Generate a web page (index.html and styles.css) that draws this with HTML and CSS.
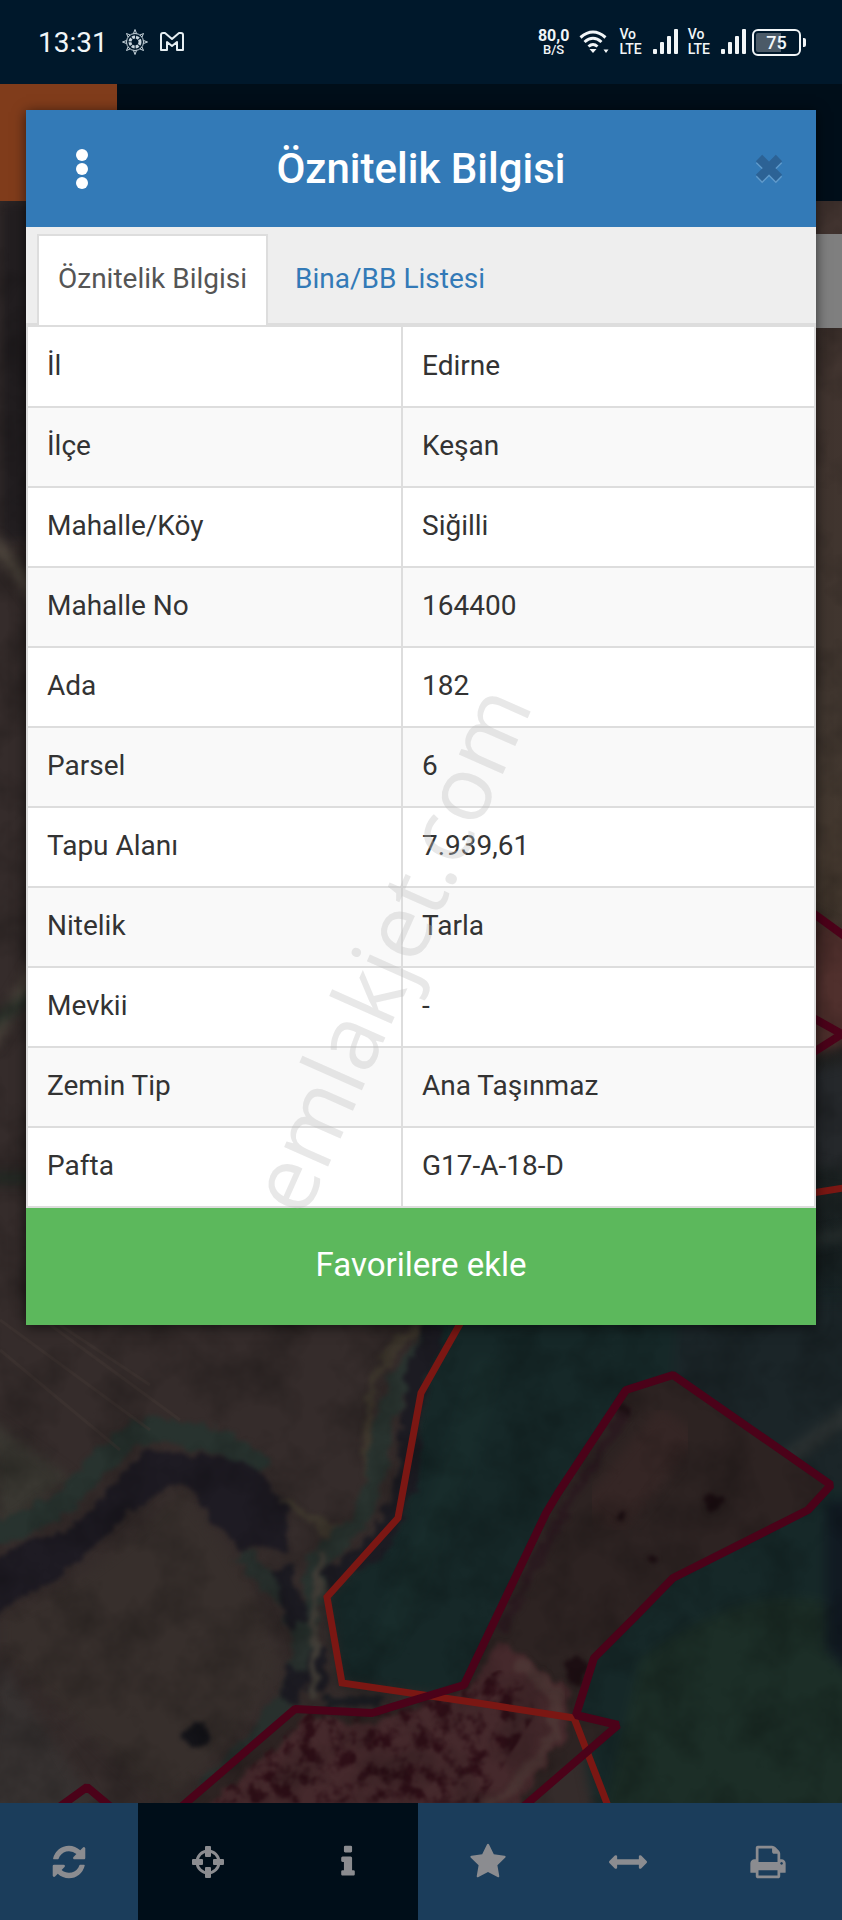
FILE: index.html
```
<!DOCTYPE html>
<html lang="tr">
<head>
  <meta charset="UTF-8" />
  <meta name="viewport" content="width=device-width, initial-scale=1.0" />
  <title>Öznitelik Bilgisi</title>
  <link rel="stylesheet" href="styles.css">
</head>
<body>
  <div class="status">
    <span class="clock">13:31</span>
    <svg class="gear" viewBox="0 0 26 26" width="26" height="26" fill="none" stroke="#c9d6de">
      <circle cx="13" cy="13" r="8.5"/>
      <circle cx="13" cy="13" r="5" stroke-width="3" stroke-dasharray="3 1"/>
      <path d="M11.5 4.5L13 .5l1.5 4M11.5 21.500l1.500 4 1.500-4M4.500 11.500L.5 13l4 1.500M21.500 11.500l4 1.500-4 1.500M6 8L4.500 4.500 8 6M20 8l1.500-3.500L18 6M6 18l-1.500 3.500L8 20M20 18l1.500 3.500L18 20"/>
    </svg>
    <svg class="mail" viewBox="0 0 24 20" width="24" height="20" fill="none" stroke="#e6eef2" stroke-width="2" stroke-linejoin="round">
      <path d="M1 3q0-2 2-2h2l7 6 7-6h2q2 0 2 2v15h-6V10l-5 4-5-4v8H1z"/>
    </svg>
    <div class="status-right">
      <div class="stack speed"><b>80,0</b><small>B/S</small></div>
      <svg class="wifi" viewBox="0 0 30 26" width="30" height="26" fill="none" stroke="#f2f6f8" stroke-width="3">
        <path d="M1.500 8.500q12.500-11 25 0M5.500 13q8.500-7.500 17 0M9.500 17.500q4.500-4 9 0"/>
        <path d="M10.500 20h7L14 24zM24.500 20.500h5L27 24z" fill="#f2f6f8" stroke="none"/>
      </svg>
      <div class="stack lte"><b>Vo</b><b>LTE</b></div>
      <svg class="signal" viewBox="0 0 26 26" width="26" height="26" fill="#f2f6f8">
        <rect y="20" width="4" height="5" rx="1"/><rect x="7" y="13" width="4" height="12" rx="1"/><rect x="14" y="7" width="4" height="18" rx="1"/><rect x="21" width="4" height="25" rx="1"/>
      </svg>
      <div class="stack lte"><b>Vo</b><b>LTE</b></div>
      <svg class="signal" viewBox="0 0 26 26" width="26" height="26" fill="#f2f6f8">
        <rect y="20" width="4" height="5" rx="1"/><rect x="7" y="13" width="4" height="12" rx="1"/><rect x="14" y="7" width="4" height="18" rx="1"/><rect x="21" width="4" height="25" rx="1"/>
      </svg>
      <div class="battery">75</div>
    </div>
  </div>

  <div class="topbar"><div class="menu-block"></div></div>

  <div class="map">
    <svg class="terrain" viewBox="0 201 842 1602" preserveAspectRatio="xMidYMax slice" color-interpolation-filters="sRGB">
      <defs>
        <filter id="soft" x="-10%" y="-10%" width="120%" height="120%"><feGaussianBlur stdDeviation="6"/></filter>
        <filter id="rough" x="-10%" y="-10%" width="120%" height="120%">
          <feTurbulence type="fractalNoise" baseFrequency="0.07" numOctaves="3" seed="4"/>
          <feDisplacementMap in="SourceGraphic" scale="18" xChannelSelector="R" yChannelSelector="G"/>
          <feGaussianBlur stdDeviation="2"/>
        </filter>
        <filter id="trees" x="0" y="0" width="100%" height="100%">
          <feTurbulence type="fractalNoise" baseFrequency="0.06" numOctaves="3" seed="9"/>
          <feColorMatrix values="0 0 0 0 .18  0 0 0 0 .06  0 0 0 0 .09  4 0 0 0 -1.8"/>
          <feComposite operator="in" in2="SourceGraphic"/>
          <feGaussianBlur stdDeviation="1"/>
        </filter>
        <filter id="grain" x="0" y="0" width="100%" height="100%">
          <feTurbulence type="fractalNoise" baseFrequency="0.02" numOctaves="4" seed="2"/>
          <feColorMatrix values="0 0 0 0 0  0 0 0 0 0  0 0 0 0 0  1.5 0 0 0 -.6"/>
        </filter>
        <linearGradient id="east" x2="0" y2="1">
          <stop offset="0" stop-color="#41332f"/><stop offset=".45" stop-color="#40362f"/>
          <stop offset=".62" stop-color="#45392f"/><stop offset=".75" stop-color="#20201f"/><stop offset="1" stop-color="#172426"/>
        </linearGradient>
      </defs>
      <rect y="201" width="842" height="1602" fill="#352c2b"/>
      <rect y="201" width="60" height="340" fill="#221e20" filter="url(#soft)"/>
      <rect x="780" y="201" width="62" height="1130" fill="url(#east)"/>
      <g filter="url(#soft)">
        <path d="M-10 1420L70 1478 0 1530z" fill="#393731"/>
        <path d="M0 1660L60 1750 110 1830H-20z" fill="#363130"/>
        <path d="M180 1490q80 90 100 180-60 100-120 130L0 1650V1620q110-50 180-130z" fill="#372f2c"/>
        <path d="M421 1300H870V1830H600L575 1715 342 1683 327 1597 398 1518 421 1393z" fill="#162828"/>
        <path d="M680 1300h190v190l-40-5-157-110z" fill="#1b2528"/>
        <path d="M640 1660q120-90 210-50v220H600z" fill="#1c2e27"/>
        <path d="M826 1500h40v190l-40-40z" fill="#111a22"/>
        <path d="M380 1650q60-120 110-290" fill="none" stroke="#182c2b" stroke-width="30"/>
        <path d="M780 1465l80-60" stroke="#2b3131" stroke-width="16"/>
      </g>
      <g filter="url(#rough)" fill="none">
        <path d="M-10 1535Q60 1515 90 1475 125 1430 165 1430 220 1435 262 1470" stroke="#28332f" stroke-width="24"/>
        <path d="M-10 1562L30 1538 67 1532 113 1485 143 1452 167 1452 207 1455 257 1468 288 1505V1548H240L213 1522 180 1480 133 1508 67 1572-10 1618z" fill="#1e1b23"/>
        <path d="M240 1555L290 1600 305 1650 280 1710 205 1790" stroke="#28302d" stroke-width="18"/>
        <path d="M425 1320Q370 1360 368 1410V1490Q365 1525 330 1532L285 1500" stroke="#40392f" stroke-width="9"/>
        <path d="M425 1350Q392 1380 384 1430T362 1520L318 1560 308 1640" stroke="#29332f" stroke-width="20"/>
        <path d="M435 1325Q406 1400 408 1480L380 1545 325 1580M280 1570L300 1625M316 1650V1690M298 1670L288 1700" stroke="#1c1b22" stroke-width="20"/>
        <path d="M322 1550L315 1600 312 1700" stroke="#413d37" stroke-width="8"/>
        <ellipse cx="197" cy="1735" rx="11" ry="12" fill="#141419"/>
        <path d="M325 1702h60" stroke="#1b1d22" stroke-width="14"/>
      </g>
      <g stroke="#443a35" stroke-width="3" opacity=".4">
        <path d="M0 1320l150 110M30 1310l150 110M0 1350l120 100M60 1325l90 60"/>
      </g>
      <g filter="url(#soft)" fill="none">
        <path d="M-10 540Q12 560 40 605M-10 1045L40 960" stroke="#5a5247" stroke-width="10"/>
        <path d="M-10 1025L40 990M-10 1178H40" stroke="#203027" stroke-width="8"/>
        <path d="M790 905L860 940V1040L790 1060z" fill="#50302d"/>
        <path d="M790 1075L860 1060V1170L790 1160z" fill="#25282b"/>
        <path d="M790 1245l60-12" stroke="#303735" stroke-width="7"/>
      </g>

      <path d="M673 1375L626 1390 558 1493 464 1685 421 1698 372 1713 295 1709 187 1803H528L618 1725 576 1715 594 1658 634 1618 673 1578 808 1510 831 1485z" fill="#2d2322"/>
      <path d="M680 1420L600 1520" stroke="#352625" stroke-width="50" filter="url(#soft)"/>
      <path d="M468 1690L421 1706 372 1722 305 1718 205 1810H515L565 1735 568 1690 500 1640z" fill="#45292c" filter="url(#rough)"/>
      <path d="M464 1685L372 1713 310 1712 210 1803H480L535 1715 530 1690 500 1670z" fill="#241018" filter="url(#trees)"/>
      <path d="M515 1665Q565 1680 555 1725T480 1810" fill="none" stroke="#4c3534" stroke-width="12" filter="url(#rough)"/>
      <path d="M628 1405L565 1510 500 1630" fill="none" stroke="#2a1a1f" stroke-width="10" filter="url(#rough)"/>
      <g fill="#1c0e12" filter="url(#rough)"><circle cx="712" cy="1502" r="8"/><circle cx="622" cy="1517" r="5"/><circle cx="652" cy="1562" r="4"/><circle cx="626" cy="1410" r="5"/><circle cx="575" cy="1670" r="12"/></g>
      <rect y="201" width="842" height="1602" filter="url(#grain)" opacity=".3"/>

      <g fill="none" stroke="#7b1713" stroke-width="7">
        <path d="M461 1322L421 1393 398 1518 327 1597 342 1683 478 1703 574 1718 608 1806"/>
        <path d="M806 1194L850 1187"/>
      </g>
      <g fill="none" stroke="#4b0219" stroke-width="8">
        <path d="M180 1808L295 1709 372 1713 421 1698 464 1685 546 1513 558 1493 626 1390 673 1375 831 1485 808 1510 673 1578 634 1618 594 1658 576 1715 618 1725 522 1808M58 1808L87 1787 112 1808" stroke-linejoin="bevel"/>
        <path d="M806 908L850 940M806 1014L842 1034 806 1057"/>
      </g>
    </svg>
    <div class="search-box"></div>
  </div>

  <div class="toolbar">
    <button class="tool" aria-label="Yenile"><svg viewBox="0 0 1792 1792"><path d="M1639 1056q0 5-1 7-64 268-268 434.500t-478 166.500q-146 0-282.500-55t-243.500-157l-129 129q-19 19-45 19t-45-19-19-45v-448q0-26 19-45t45-19h448q26 0 45 19t19 45-19 45l-137 137q71 66 161 102t187 36q134 0 250-65t186-179q11-17 53-117 8-23 30-23h192q13 0 22.500 9.500t9.500 22.500zm25-800v448q0 26-19 45t-45 19h-448q-26 0-45-19t-19-45 19-45l138-138q-148-137-349-137-134 0-250 65t-186 179q-11 17-53 117-8 23-30 23h-199q-13 0-22.500-9.500t-9.500-22.500v-7q65-268 270-434.500t480-166.500q146 0 284 55.500t245 156.500l130-129q19-19 45-19t45 19 19 45z"/></svg></button>
    <button class="tool dark" aria-label="Konum"><svg viewBox="0 0 38 38"><circle cx="19" cy="19" r="11" fill="none" stroke="#8b8c90" stroke-width="3"/><rect x="16" y="3" width="6" height="11" rx="1"/><rect x="16" y="24" width="6" height="11" rx="1"/><rect x="3" y="16" width="11" height="6" rx="1"/><rect x="24" y="16" width="11" height="6" rx="1"/></svg></button>
    <button class="tool dark" aria-label="Bilgi"><svg viewBox="0 0 1792 1792"><path d="M1216 1344v128q0 26-19 45t-45 19h-512q-26 0-45-19t-19-45v-128q0-26 19-45t45-19h64v-384h-64q-26 0-45-19t-19-45v-128q0-26 19-45t45-19h384q26 0 45 19t19 45v576h64q26 0 45 19t19 45zm-128-1152v192q0 26-19 45t-45 19h-256q-26 0-45-19t-19-45v-192q0-26 19-45t45-19h256q26 0 45 19t19 45z"/></svg></button>
    <button class="tool" aria-label="Favoriler"><svg viewBox="0 0 1792 1792"><path d="M1728 647q0 22-26 48l-363 354 86 500q1 7 1 20 0 21-10.500 35.500t-30.500 14.500q-19 0-40-12l-449-236-449 236q-22 12-40 12-21 0-31.500-14.500t-10.500-35.500q0-6 2-20l86-500-364-354q-25-27-25-48 0-37 56-46l502-73 225-455q19-41 49-41t49 41l225 455 502 73q56 9 56 46z"/></svg></button>
    <button class="tool" aria-label="Ölçüm"><svg viewBox="0 0 1792 1792"><path d="M1792 896q0 26-19 45l-256 256q-19 19-45 19t-45-19-19-45v-128h-1024v128q0 26-19 45t-45 19-45-19l-256-256q-19-19-19-45t19-45l256-256q19-19 45-19t45 19 19 45v128h1024v-128q0-26 19-45t45-19 45 19l256 256q19 19 19 45z"/></svg></button>
    <button class="tool" aria-label="Yazdır"><svg viewBox="0 0 1792 1792"><path d="M448 1536h896v-256h-896v256zm0-640h896v-384h-160q-40 0-68-28t-28-68v-160h-640v640zm1152 64q0-26-19-45t-45-19-45 19-19 45 19 45 45 19 45-19 19-45zm128 0v416q0 13-9.500 22.500t-22.500 9.500h-224v160q0 40-28 68t-68 28h-960q-40 0-68-28t-28-68v-160h-224q-13 0-22.500-9.500t-9.500-22.500v-416q0-79 56.500-135.500t135.500-56.500h64v-544q0-40 28-68t68-28h672q40 0 88 20t76 48l152 152q28 28 48 76t20 88v256h64q79 0 135.500 56.500t56.500 135.500z"/></svg></button>
  </div>

  <div class="modal">
    <div class="modal-header">
      <button class="icon-btn" aria-label="Menü"><svg viewBox="0 0 12 40" width="12" height="40" fill="#fff"><circle cx="6" cy="6" r="6"/><circle cx="6" cy="20" r="6"/><circle cx="6" cy="34" r="6"/></svg></button>
      <h1>Öznitelik Bilgisi</h1>
      <button class="icon-btn close" aria-label="Kapat"><svg viewBox="0 0 30 32" width="30" height="32"><path d="M5 7l20 20M25 7L5 27" stroke="#5f9acb" stroke-width="9"/><path d="M5 5l20 20M25 5L5 25" stroke="#2c6295" stroke-width="9"/></svg></button>
    </div>
    <div class="tabs">
      <a href="#oznitelik" class="tab active">Öznitelik Bilgisi</a>
      <a href="#bina" class="tab">Bina/BB Listesi</a>
    </div>
    <table id="oznitelik">
      <tr><th scope="row">İl</th><td>Edirne</td></tr>
      <tr><th scope="row">İlçe</th><td>Keşan</td></tr>
      <tr><th scope="row">Mahalle/Köy</th><td>Siğilli</td></tr>
      <tr><th scope="row">Mahalle No</th><td>164400</td></tr>
      <tr><th scope="row">Ada</th><td>182</td></tr>
      <tr><th scope="row">Parsel</th><td>6</td></tr>
      <tr><th scope="row">Tapu Alanı</th><td>7.939,61</td></tr>
      <tr><th scope="row">Nitelik</th><td>Tarla</td></tr>
      <tr><th scope="row">Mevkii</th><td>-</td></tr>
      <tr><th scope="row">Zemin Tip</th><td>Ana Taşınmaz</td></tr>
      <tr><th scope="row">Pafta</th><td>G17-A-18-D</td></tr>
    </table>
    <button class="favorite">Favorilere ekle</button>
  </div>
  <div class="watermark">emlakjet.com</div>
</body>
</html>
```
FILE: styles.css
```
* { box-sizing: border-box; }
body {
  margin: 0;
  min-height: 100vh;
  display: flex;
  flex-direction: column;
  position: relative;
  overflow-x: hidden;
  font-family: Roboto, "Liberation Sans", sans-serif;
  font-size: 28px;
  color: #333;
  background: #322a29;
}
button {
  font-family: inherit;
  border: none;
  padding: 0;
  cursor: pointer;
}

/* phone status bar */
.status {
  height: 84px;
  padding: 0 41px 0 38px;
  display: flex;
  align-items: center;
  background: #00182b;
  color: #f2f6f8;
}
.clock { font-size: 28px; }
.gear { margin-left: 14px; }
.mail { margin-left: 12px; }
.status-right {
  margin-left: auto;
  display: flex;
  align-items: center;
}
.stack {
  display: flex;
  flex-direction: column;
  align-items: center;
  font-size: 15px;
  line-height: 15px;
  font-weight: 500;
}
.stack b { font-weight: 500; }
.stack small {
  font-size: 13px;
  line-height: 13px;
}
.speed { font-size: 16px; }
.speed b { font-weight: 700; }
.lte {
  align-items: flex-start;
  font-size: 14px;
}
.wifi { margin: 0 10px; }
.signal { margin: 0 9px 0 11px; }
.signal:nth-last-child(2) { margin-right: 5px; }
.battery {
  position: relative;
  width: 49px;
  height: 27px;
  border: 2px solid #f2f6f8;
  border-radius: 6px;
  background: linear-gradient(90deg, #4b5a67 60%, #00182b 60%);
  background-clip: content-box;
  padding: 2px;
  font-size: 18px;
  line-height: 19px;
  font-weight: 500;
  text-align: center;
}
.battery::after {
  content: "";
  position: absolute;
  right: -7px;
  top: 7px;
  width: 3px;
  height: 9px;
  border-radius: 0 2px 2px 0;
  background: #f2f6f8;
}

.topbar {
  height: 117px;
  background: #000e19;
}
.menu-block {
  width: 117px;
  height: 117px;
  background: #803c1b;
}

/* map */
.map {
  flex: 1;
  min-height: 1200px;
  position: relative;
  overflow: hidden;
}
.terrain {
  position: absolute;
  width: 100%;
  height: 100%;
}
.search-box {
  position: absolute;
  top: 33px;
  right: 0;
  width: 60%;
  height: 94px;
  background: #7f7f7f;
}

.toolbar {
  height: 117px;
  padding-right: 4px;
  display: grid;
  grid-template-columns: 138px repeat(5, 1fr);
  background: #1b3d5b;
}
.tool {
  display: flex;
  align-items: center;
  justify-content: center;
  background: #1b3d5b;
}
.tool.dark { background: #000e19; }
.tool svg {
  width: 38px;
  height: 38px;
  fill: #8b8c90;
}

/* parcel info window */
.modal {
  position: absolute;
  top: 110px;
  left: 26px;
  right: 26px;
  background: #fff;
  box-shadow: 0 2px 12px rgba(0,0,0,0.6);
}
.modal-header {
  height: 117px;
  padding: 0 16px;
  display: flex;
  align-items: center;
  justify-content: space-between;
  background: #337ab7;
  color: #fff;
}
.modal-header h1 {
  margin: 0;
  font-size: 42px;
  font-weight: 500;
}
.icon-btn {
  width: 80px;
  height: 80px;
  display: flex;
  align-items: center;
  justify-content: center;
  background: none;
}
.icon-btn.close {
  justify-content: flex-end;
  padding-right: 16px;
}
.tabs {
  height: 100px;
  padding: 7px 11px 0;
  display: flex;
  background: #eee;
  border-bottom: 4px solid #ddd;
}
.tab {
  height: 91px;
  margin-right: 6px;
  padding: 0 19px;
  border: 2px solid transparent;
  border-bottom: none;
  line-height: 86px;
  color: #337ab7;
  text-decoration: none;
}
.tab.active {
  color: #555;
  background: #fff;
  border-color: #ddd;
}
table {
  width: 100%;
  border-collapse: collapse;
  border: 2px solid #ddd;
  border-top: none;
}
th, td {
  height: 80px;
  padding: 0 19px 3px;
  font-weight: 400;
  text-align: left;
  border-bottom: 2px solid #ddd;
}
th {
  width: 375px;
  border-right: 2px solid #ddd;
}
tr:nth-child(even) { background: #f9f9f9; }
.favorite {
  display: block;
  width: 100%;
  height: 117px;
  padding-bottom: 4px;
  background: #5cb85c;
  color: #fff;
  font-size: 33px;
}
.watermark {
  position: absolute;
  top: calc(50% - 12px);
  left: 46%;
  transform: translate(-50%, -50%) rotate(-66deg);
  font-family: "Open Sans", "Noto Sans", sans-serif;
  font-size: 90px;
  color: rgba(190,190,190,0.35);
  pointer-events: none;
}
```
